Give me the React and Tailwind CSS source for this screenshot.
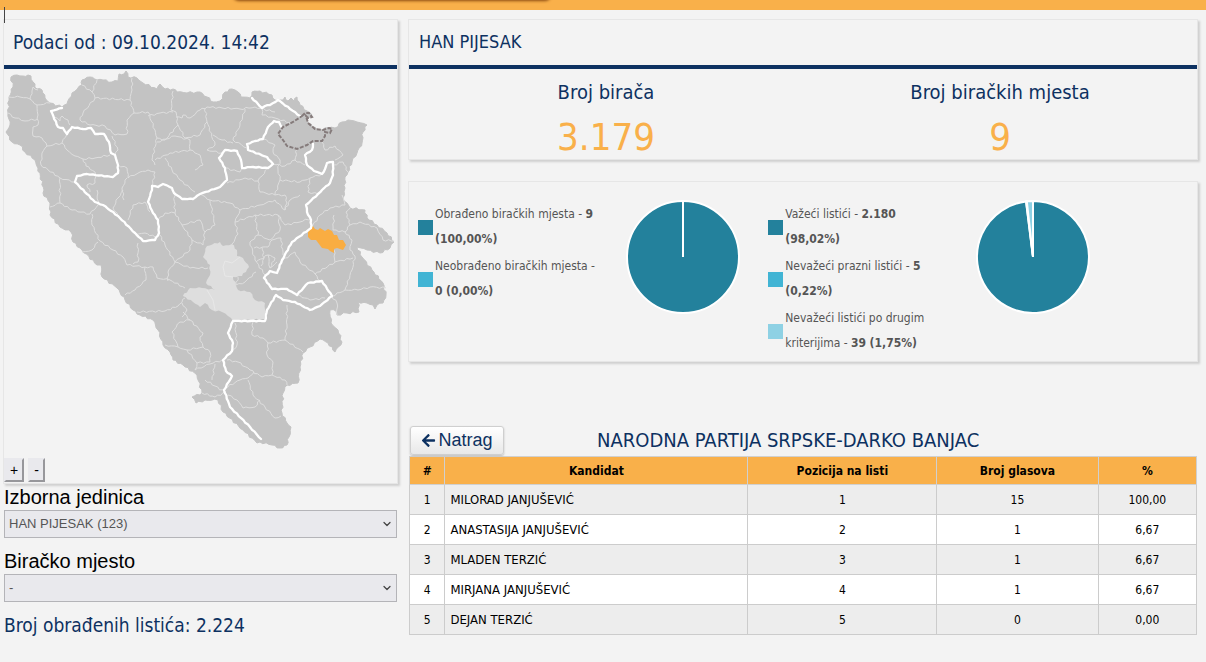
import { useId } from "react";
import { FaArrowLeft } from "react-icons/fa";
import { ChevronDown } from "lucide-react";

const COUNTRY =
  "11,77 17,75 23,76 28,75 31,76 33,82 37,89 42,90 45,98 50,103 62,107 67,104 72,93 82,85 82,80 90,77 97,80 103,80 112,82 118,81 119,74 124,74 126,71 128,77 137,78 143,83 157,89 160,84 165,89 173,89 177,92 187,93 197,92 200,92 207,97 213,102 220,101 225,92 232,89 238,92 241,97 250,98 252,92 260,91 272,95 275,100 283,100 285,97 288,101 291,98 294,101 297,97 300,105 307,111 312,115 307,120 312,127 320,130 328,128 335,128 342,122 348,120 357,122 367,125 363,132 362,143 357,153 352,162 348,172 345,177 345,188 343,198 350,208 365,210 367,218 377,225 387,233 394,242 390,248 380,253 367,250 357,247 362,257 372,270 383,283 386,295 383,303 377,305 375,309 373,305 367,303 358,302 359,312 347,313 337,315 336,311 330,310 331,323 338,330 342,342 335,352 328,343 320,339 310,347 303,353 300,367 298,383 287,385 283,393 282,413 287,423 291,427 289,437 287,445 280,448 272,445 260,442 257,443 243,430 223,412 218,400 205,400 196,403 192,397 202,393 197,375 183,365 173,360 170,352 163,345 158,330 153,320 140,315 133,310 125,300 117,288 102,277 101,265 97,265 82,250 73,242 71,232 60,227 50,215 50,203 43,193 44,190 38,168 35,160 25,152 20,145 12,142 6,132 10,125 8,113 9,97 13,87";

const HERZEGOVINA =
  "220,242 223,246 232,244 237,250 237,256 243,258 249,267 242,276 233,277 238,290 250,292 255,300 265,303 265,319 233,321 228,316 222,312 212,310 205,303 200,307 193,302 183,296 190,288 202,288 215,290 206,283 210,275 210,265 203,257 207,246";

const SELECTED =
  "313,226 315,229 318,230 320,228 325,231 328,229 332,231 334,235 337,235 339,240 343,240 346,245 343,250 337,248 334,249 334,253 330,251 328,249 322,248 319,244 316,240 311,240 308,237 308,232";

const BRCKO =
  "302,116 305,113 309,113 312,117 308,118 306,116 308,123 315,129 323,130 329,128 332,129 330,133 325,132 325,136 322,141 313,141 307,145 297,149 287,146 283,140 278,134 283,127 293,122";

const CANTON_LINES = [
  "62,108 51,111 58,127 63,128 67,134 72,127 83,129 91,128 95,134 104,134 109,142 111,153 115,155 118,165 118,173 113,177 87,174 77,176 75,182 87,194 95,202 103,205 118,216 135,233 143,241 155,240 159,233 158,220 153,213 148,202 152,190 152,186 158,187 163,184 172,188 174,193 182,199 193,199 200,194 220,187 227,180 225,168 219,158 225,150 237,151 241,160 242,168 253,167 268,168 273,164 267,157 248,150 247,144 255,141 263,139 268,127 274,121 279,122 282,128",
  "252,98 262,108 265,106 270,105 278,100 300,116",
  "313,144 312,150 305,155 307,165 314,171 322,174 325,169 327,163 333,162 333,175 330,183 322,190 318,194 306,205 307,212 311,220 311,228 292,242 282,260 277,273 270,271 264,278 272,289 287,289 297,295 308,283 322,281 332,296 320,306 310,310 295,302 283,300 276,295 267,310 265,321 233,321 228,333 233,343 232,351 223,360 226,371 232,376 224,390 230,407 250,427 261,439",
];

const BOROUGH_LINES = [
  "9,97 20,97 30,99 32,91 33,87 38,90",
  "30,99 37,105 50,103",
  "37,105 38,115 38,125 33,127 33,136 42,138 47,146 62,143 67,134",
  "8,113 15,118 25,121 38,119",
  "47,146 42,153 41,165 60,178 75,182",
  "60,178 60,203",
  "50,207 60,203 72,210 90,214 98,205 97,190",
  "62,143 67,150 75,156 83,159 95,158 110,155",
  "83,159 86,166 95,172 96,176 95,183 87,185 90,192",
  "54,117 60,121 62,116 68,120 70,125",
  "82,85 92,92 95,98 130,100 132,90 132,78",
  "97,80 92,92",
  "95,98 83,113 80,120 90,125 105,126 115,135 127,134 127,120 134,113 130,100",
  "134,113 148,112 155,130 157,138 152,160 155,165",
  "173,91 171,110 176,112 178,125 165,140 157,138",
  "148,116 160,113 173,112",
  "176,117 182,118 183,115 190,118 200,110 207,107 240,109 255,107 275,112",
  "157,142 175,136 190,140 190,150 170,153 155,160",
  "112,136 118,150 115,155",
  "118,165 127,168 128,178 140,172 148,170 155,172 152,186",
  "127,178 122,188 124,200",
  "165,158 172,170 180,180 195,192",
  "190,150 200,155 203,165 195,170",
  "178,125 185,138 200,135 207,122 205,108",
  "207,122 215,145 207,150 222,153",
  "245,109 240,125 233,140 247,148",
  "213,135 222,140 233,143",
  "262,108 262,115 275,118 290,123",
  "263,139 275,145 273,152 280,160 278,170",
  "297,149 295,160 305,165",
  "322,142 325,150 335,146 343,155 335,160",
  "333,165 343,162 348,172",
  "273,164 285,166 295,160",
  "225,168 240,172 242,168",
  "227,183 245,178 258,181 268,168",
  "258,181 260,192 275,195 280,180 278,170",
  "280,180 300,182 310,178 322,174",
  "310,178 308,192 318,194",
  "123,190 118,198 113,208 118,216",
  "135,235 145,233 155,237",
  "128,220 133,205 145,202 150,212",
  "138,243 138,262 133,264",
  "92,214 92,225 100,241 113,250 123,257 127,265 145,267 153,267 157,278 170,280 185,288",
  "82,252 92,250 98,242",
  "145,267 146,280 135,290 125,295",
  "160,235 165,245 175,262 190,250 192,240",
  "158,220 165,213 175,213 182,225 192,240 203,245",
  "175,213 174,193",
  "182,225 200,220 205,232 203,245",
  "175,262 168,272 168,281",
  "175,262 190,268 208,268",
  "137,312 165,311 178,306 185,298",
  "182,303 187,310 182,317",
  "200,194 210,200 215,225 205,232",
  "210,200 230,203 240,210 260,205 275,200 285,210 290,200 300,195",
  "240,210 235,222 238,234 232,244",
  "235,222 255,215 278,215 280,230 270,240 258,235 255,215",
  "258,235 250,242 255,260 265,275",
  "254,248 268,247 272,240 281,238 283,255",
  "256,262 268,255 275,258 270,268",
  "262,247 264,258 261,266",
  "268,255 270,268 277,262",
  "278,215 285,225 300,222 311,218",
  "285,210 287,203 285,195 275,195",
  "280,262 295,252 300,262 315,274 335,262 334,250",
  "315,274 320,281",
  "311,228 320,215 330,208 345,205 342,195",
  "334,215 333,230 345,232 350,225 346,212 350,208",
  "345,232 352,240 350,250 355,256 352,270 345,290 358,290 370,287 386,288",
  "350,225 360,222 377,228 383,240 394,241",
  "335,262 353,258",
  "332,296 345,290",
  "297,295 310,300 325,298",
  "332,296 337,303 337,315",
  "238,277 236,285 245,282 256,272",
  "165,345 178,347 187,350 203,347 200,337 203,333 190,320 183,312",
  "178,347 172,332 180,322 190,320",
  "187,350 197,363 210,362 210,352 203,347",
  "197,363 195,370 210,364 222,360",
  "235,323 237,345 232,352",
  "253,322 252,335 263,338 268,343 285,340 303,352",
  "287,305 287,325 285,340",
  "268,343 267,355 273,362 272,375 285,380 287,385",
  "227,360 238,362 250,370 262,377 272,375",
  "225,388 240,380 248,378 254,372",
  "248,380 253,395 265,407 275,418 281,416",
  "205,380 215,386 225,392",
  "215,364 212,380",
  "228,395 237,400 243,408 255,407 260,400",
  "202,393 215,397 226,392",
];

/* Splits every edge and shifts the new points sideways, so that borders look surveyed. */
function roughen(source, closed, size) {
  const points = source.split(" ").map((pair) => pair.split(",").map(Number));
  const count = closed ? points.length : points.length - 1;
  const out = [];
  for (let i = 0; i < count; i += 1) {
    const [ax, ay] = points[i];
    const [bx, by] = points[(i + 1) % points.length];
    const length = Math.hypot(bx - ax, by - ay) || 1;
    const steps = Math.max(1, Math.round(length / 3));
    for (let s = 0; s < steps; s += 1) {
      const t = s / steps;
      const shift = s === 0 ? 0 : Math.sin(ax * 3.1 + ay * 1.7 + s * 2.4) * size;
      out.push(
        `${(ax + (bx - ax) * t - ((by - ay) / length) * shift).toFixed(1)},${(ay + (by - ay) * t + ((bx - ax) / length) * shift).toFixed(1)}`
      );
    }
  }
  if (!closed) out.push(points[points.length - 1].join(","));
  return out.join(" ");
}

function RegionMap() {
  return (
    <svg viewBox="4 69 393 386" className="block w-full" role="img" aria-label="Bosna i Hercegovina">
      <polygon points={roughen(COUNTRY, true, 1)} fill="#c3c3c3" stroke="#c3c3c3" strokeWidth="1" />
      <g fill="none" stroke="#dedede" strokeWidth="1" strokeLinejoin="round">
        {BOROUGH_LINES.map((line) => (
          <polyline key={line} points={roughen(line, false, 0.9)} />
        ))}
      </g>
      <polygon points={roughen(HERZEGOVINA, true, 0.8)} fill="#dedede" />
      <g fill="none" stroke="#eaeaea" strokeWidth="0.8">
        <polyline points="223,267 225,261 232,263 240,257" />
        <polyline points="223,267 225,276 233,277" />
        <polyline points="207,290 213,300 215,310" />
      </g>
      <polygon points={SELECTED} fill="#f9ad42" />
      <g fill="none" stroke="#ffffff" strokeWidth="2.3" strokeLinejoin="round" strokeLinecap="round">
        {CANTON_LINES.map((line) => (
          <polyline key={line} points={roughen(line, false, 0.4)} />
        ))}
      </g>
      <polygon points={BRCKO} fill="#c3c3c3" stroke="#857b7b" strokeWidth="2" strokeDasharray="4 1.5" />
    </svg>
  );
}

function slicePath(from, to) {
  const at = (share) => {
    const angle = share * 2 * Math.PI;
    return `${(60 + 56 * Math.sin(angle)).toFixed(2)} ${(60 - 56 * Math.cos(angle)).toFixed(2)}`;
  };
  return `M60 60L${at(from)}A56 56 0 ${to - from > 0.5 ? 1 : 0} 1 ${at(to)}Z`;
}

function Pie({ slices, label }) {
  let start = 0;
  return (
    <svg viewBox="0 0 120 120" className="size-[120px] shrink-0" role="img" aria-label={label}>
      {slices.map(({ share, fill }) => {
        const from = start;
        start += share;
        return share === 1 ? (
          <g key={fill} stroke="#ffffff" strokeWidth="2">
            <circle cx="60" cy="60" r="56" fill={fill} />
            <path d="M60 4V60" />
          </g>
        ) : (
          <path key={fill} d={slicePath(from, start)} fill={fill} stroke="#ffffff" strokeWidth="2" />
        );
      })}
    </svg>
  );
}

function Legend({ items }) {
  return (
    <ul className="flex w-[180px] flex-col gap-[2px]">
      {items.map(({ swatch, text, count, share }) => (
        <li key={text} className="flex items-center gap-[2px]">
          <span className={`size-[15px] shrink-0 ${swatch}`} />
          <span className="text-[12px] leading-[25px] text-[#555555]">
            {`${text} - `}
            <b>{count}</b> <b>{share}</b>
          </span>
        </li>
      ))}
    </ul>
  );
}

function Card({ children }) {
  return (
    <section className="border border-[#e6e6e6] bg-[#f3f3f3] shadow-[2px_2px_2px_#cfcfcf]">
      {children}
    </section>
  );
}

function SelectField({ label, value, className }) {
  const id = useId();
  return (
    <div className={className}>
      <label htmlFor={id} className="block font-['Liberation_Sans',sans-serif] text-[20px] leading-[26px] text-black">
        {label}
      </label>
      <div className="relative">
        <select
          id={id}
          defaultValue={value}
          className="block h-7 w-full appearance-none border border-[#b4b4b8] bg-[#e9e9ed] px-1 font-['Liberation_Sans',sans-serif] text-[13px] text-[#555555]"
        >
          <option>{value}</option>
        </select>
        <ChevronDown className="pointer-events-none absolute top-2 right-1 size-3 text-[#444444]" strokeWidth={2.5} />
      </div>
    </div>
  );
}

function Stat({ label, value }) {
  return (
    <div className="text-center">
      <div className="pt-2 text-[20px] leading-[30px] text-[#0d3161]">{label}</div>
      <div className="pt-2 text-[38px] leading-[44px] text-[#f9b04a]">{value}</div>
    </div>
  );
}

const CANDIDATES = [
  ["1", "MILORAD JANJUŠEVIĆ", "1", "15", "100,00"],
  ["2", "ANASTASIJA JANJUŠEVIĆ", "2", "1", "6,67"],
  ["3", "MLADEN TERZIĆ", "3", "1", "6,67"],
  ["4", "MIRJANA JANJUŠEVIĆ", "4", "1", "6,67"],
  ["5", "DEJAN TERZIĆ", "5", "0", "0,00"],
];

const COLUMNS = [
  { title: "#", width: "w-[4.5%]" },
  { title: "Kandidat", width: "w-[38.5%]" },
  { title: "Pozicija na listi", width: "w-[24%]" },
  { title: "Broj glasova", width: "w-[20.5%]" },
  { title: "%", width: "w-[12.5%]" },
];

export default function App() {
  return (
    <div className="relative min-h-screen bg-[#f3f3f3] font-['DejaVu_Sans_Condensed','DejaVu_Sans',sans-serif]">
      <header className="flex h-[10px] justify-center overflow-hidden bg-[#f9b04a] pr-[422px]">
        <div className="-mt-3 h-3 w-[318px] rounded-b-md bg-[#8a5a20] shadow-[0_1px_3px_#8a4a10]" />
      </header>
      <span className="absolute top-[7px] left-1 h-4 w-px bg-[#444444]" />

      <div className="grid grid-cols-[1fr_2fr] gap-[10px] pt-[9px] pr-2 pl-[3px]">
        <aside>
          <Card>
            <h2 className="border-b-4 border-[#0d3161] px-[9px] pt-[7px] pb-2 text-[19px] leading-[30px] text-[#0d3161]">
              Podaci od : 09.10.2024. 14:42
            </h2>
            <RegionMap />
            <div className="flex gap-1 pt-[3px] pb-px font-['Liberation_Sans',sans-serif] text-[14px] text-black">
              <button className="h-6 border-2 border-t-[#e9e9ed] border-r-[#97979b] border-b-[#97979b] border-l-[#e9e9ed] bg-[#e9e9ed] px-1">
                +
              </button>
              <button className="h-6 border-2 border-t-[#e9e9ed] border-r-[#97979b] border-b-[#97979b] border-l-[#e9e9ed] bg-[#e9e9ed] px-1">
                -
              </button>
            </div>
          </Card>
          <div className="px-px">
            <SelectField label="Izborna jedinica" value="HAN PIJESAK (123)" />
            <SelectField label="Biračko mjesto" value="-" className="pt-[10px]" />
            <p className="pt-2 text-[19px] leading-[30px] text-[#0d3161]">Broj obrađenih listića: 2.224</p>
          </div>
        </aside>

        <main>
          <Card>
            <h1 className="border-b-4 border-[#0d3161] px-[10px] pt-[7px] pb-2 text-[18px] leading-[30px] text-[#0d3161]">
              HAN PIJESAK
            </h1>
            <div className="grid grid-cols-2">
              <Stat label="Broj birača" value="3.179" />
              <Stat label="Broj biračkih mjesta" value="9" />
            </div>
          </Card>

          <div className="pt-[21px]">
            <Card>
              <div className="grid grid-cols-9 pt-5 pb-[5px]">
                <div className="col-span-4 flex justify-between pr-4 pl-[9px]">
                  <Legend
                    items={[
                      { swatch: "bg-[#23819c]", text: "Obrađeno biračkih mjesta", count: "9", share: "(100,00%)" },
                      { swatch: "bg-[#41b4d4]", text: "Neobrađeno biračkih mjesta", count: "0", share: "(0,00%)" },
                    ]}
                  />
                  <div className="-mt-[5px]">
                    <Pie label="Biračka mjesta" slices={[{ share: 1, fill: "#23819c" }]} />
                  </div>
                </div>
                <div className="col-span-4 flex justify-between pr-4 pl-[9px]">
                  <Legend
                    items={[
                      { swatch: "bg-[#23819c]", text: "Važeći listići", count: "2.180", share: "(98,02%)" },
                      { swatch: "bg-[#41b4d4]", text: "Nevažeći prazni listići", count: "5", share: "(0,22%)" },
                      {
                        swatch: "bg-[#8ed1e4]",
                        text: "Nevažeći listići po drugim kriterijima",
                        count: "39",
                        share: "(1,75%)",
                      },
                    ]}
                  />
                  <div className="-mt-[5px]">
                    <Pie
                      label="Listići"
                      slices={[
                        { share: 0.9802, fill: "#23819c" },
                        { share: 0.0022, fill: "#41b4d4" },
                        { share: 0.0176, fill: "#8ed1e4" },
                      ]}
                    />
                  </div>
                </div>
              </div>
            </Card>
          </div>

          <div className="grid grid-cols-[94px_1fr] items-center pt-16 pb-px pl-[2px]">
            <button className="flex h-[29px] items-center justify-center gap-[2px] rounded-[3px] border border-[#cfcfcf] bg-linear-to-b from-white to-[#e8e8e8] font-['Liberation_Sans',sans-serif] text-[18px] text-[#0d3161] shadow-[0_1px_2px_#bbbbbb]">
              <FaArrowLeft className="size-[15px]" />
              Natrag
            </button>
            <h2 className="pl-[93px] text-[20px] leading-[29px] text-[#0d3161]">NARODNA PARTIJA SRPSKE-DARKO BANJAC</h2>
          </div>

          <div className="px-px">
            <table className="w-full table-fixed border-collapse text-center text-[12px] text-black">
              <thead>
                <tr className="h-7 bg-[#f9b04a]">
                  {COLUMNS.map(({ title, width }) => (
                    <th key={title} className={`border border-[#d0d0d0] font-bold ${width}`}>
                      {title}
                    </th>
                  ))}
                </tr>
              </thead>
              <tbody>
                {CANDIDATES.map(([rank, name, position, votes, percent]) => (
                  <tr key={rank} className="h-[30px] odd:bg-[#ededed] even:bg-white">
                    <td className="border border-[#cccccc]">{rank}</td>
                    <td className="border border-[#cccccc] px-[5px] text-left text-[13px]">{name}</td>
                    <td className="border border-[#cccccc]">{position}</td>
                    <td className="border border-[#cccccc]">{votes}</td>
                    <td className="border border-[#cccccc]">{percent}</td>
                  </tr>
                ))}
              </tbody>
            </table>
          </div>
        </main>
      </div>
    </div>
  );
}
